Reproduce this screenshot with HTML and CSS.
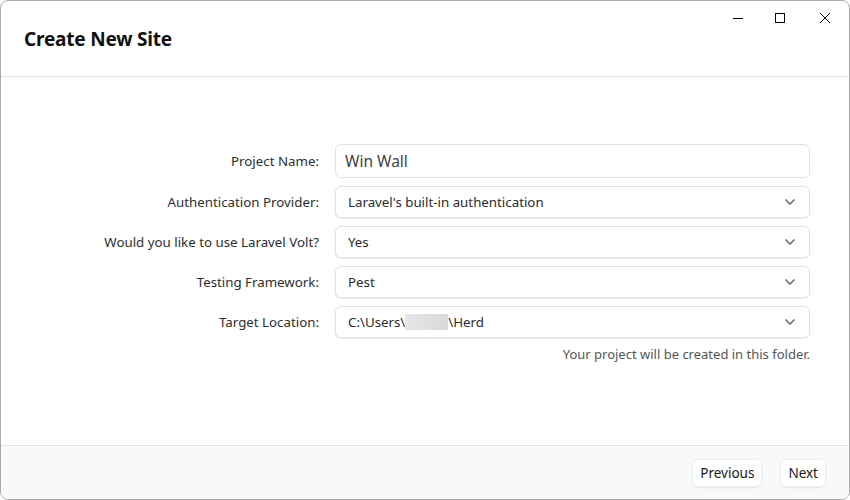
FILE: index.html
```html
<!DOCTYPE html>
<html>
<head>
<meta charset="utf-8">
<link rel="stylesheet" href="styles.css">
</head>
<body>
<div class="window">
  <header class="header">
    <h1 class="title">Create New Site</h1>
    <div class="controls">
      <span class="ctl"><svg width="12" height="12" viewBox="0 0 12 12"><path d="M1 6.5h10" stroke="#000" stroke-width="1"/></svg></span>
      <span class="ctl"><svg width="12" height="12" viewBox="0 0 12 12"><rect x="1.5" y="1.5" width="9" height="9" fill="none" stroke="#000" stroke-width="1"/></svg></span>
      <span class="ctl"><svg width="12" height="12" viewBox="0 0 12 12"><path d="M1 1L11 11M11 1L1 11" stroke="#000" stroke-width="1"/></svg></span>
    </div>
  </header>
  <main class="main">
    <div class="form">
      <label class="label">Project Name:</label>
      <div class="input">Win Wall</div>
      <label class="label">Authentication Provider:</label>
      <div class="select"><span>Laravel's built-in authentication</span><svg class="chev" width="12" height="8" viewBox="0 0 12 8"><path d="M1.5 1.5L6 6L10.5 1.5" fill="none" stroke="#6b6f76" stroke-width="1.6"/></svg></div>
      <label class="label">Would you like to use Laravel Volt?</label>
      <div class="select"><span>Yes</span><svg class="chev" width="12" height="8" viewBox="0 0 12 8"><path d="M1.5 1.5L6 6L10.5 1.5" fill="none" stroke="#6b6f76" stroke-width="1.6"/></svg></div>
      <label class="label">Testing Framework:</label>
      <div class="select"><span>Pest</span><svg class="chev" width="12" height="8" viewBox="0 0 12 8"><path d="M1.5 1.5L6 6L10.5 1.5" fill="none" stroke="#6b6f76" stroke-width="1.6"/></svg></div>
      <label class="label">Target Location:</label>
      <div class="select"><span>C:\Users\<span class="redact"></span>\Herd</span><svg class="chev" width="12" height="8" viewBox="0 0 12 8"><path d="M1.5 1.5L6 6L10.5 1.5" fill="none" stroke="#6b6f76" stroke-width="1.6"/></svg></div>
      <div></div>
      <p class="help">Your project will be created in this folder.</p>
    </div>
  </main>
  <footer class="footer">
    <button class="btn">Previous</button>
    <button class="btn">Next</button>
  </footer>
</div>
</body>
</html>
```

FILE: styles.css
```css
html, body {
  margin: 0;
  padding: 0;
  background: #ffffff;
}
body {
  font-family: "Noto Sans", "Open Sans", sans-serif;
  color: #2b2b2b;
}
.window {
  width: 850px;
  height: 500px;
  box-sizing: border-box;
  border: 1px solid #ababab;
  border-radius: 8px;
  overflow: hidden;
  display: flex;
  flex-direction: column;
  background: #fff;
}
.header {
  height: 75px;
  border-bottom: 1px solid #e3e3e3;
  display: flex;
  justify-content: space-between;
  align-items: flex-start;
  flex-shrink: 0;
}
.title {
  margin: 25px 0 0 23px;
  font-size: 19px;
  font-weight: 700;
  color: #111;
  letter-spacing: -0.2px;
}
.controls {
  display: flex;
}
.ctl {
  width: 42px;
  height: 34px;
  display: flex;
  align-items: center;
  justify-content: center;
}
.ctl:last-child {
  width: 48px;
}
.main {
  flex: 1;
  padding: 67px 39px 0 0;
}
.form {
  display: grid;
  grid-template-columns: 1fr 475px;
  column-gap: 16px;
  row-gap: 8px;
  align-items: center;
}
.label {
  text-align: right;
  font-size: 13.3px;
  color: #2e2e2e;
}
.input, .select {
  box-sizing: border-box;
  border: 1px solid #e2e2e4;
  border-radius: 6px;
  background: #fff;
  display: flex;
  align-items: center;
}
.input {
  height: 34px;
  padding: 0 9px;
  font-size: 15.5px;
  color: #444;
}
.select {
  height: 32px;
  padding: 0 12px;
  justify-content: space-between;
  font-size: 13.3px;
  color: #2b2b2b;
  box-shadow: 0 1px 2px rgba(0,0,0,0.08);
}
.chev {
  margin-right: 1px;
}
.redact {
  display: inline-block;
  width: 43px;
  height: 16px;
  vertical-align: -3px;
  background: linear-gradient(90deg, #e6e6e8, #d9d9dc);
}
.help {
  margin: 0;
  line-height: 16px;
  text-align: right;
  font-size: 13px;
  color: #555;
}
.footer {
  height: 53px;
  border-top: 1px solid #e3e3e3;
  background: #f8f9fb;
  display: flex;
  justify-content: flex-end;
  align-items: center;
  gap: 18px;
  padding-right: 23px;
  flex-shrink: 0;
}
.btn {
  font-family: inherit;
  font-size: 13.5px;
  color: #1a1a1a;
  height: 28px;
  padding: 0 7px;
  background: #fff;
  border: 1px solid #efefef;
  border-radius: 6px;
  box-shadow: 0 1px 2px rgba(0,0,0,0.08);
}
```
